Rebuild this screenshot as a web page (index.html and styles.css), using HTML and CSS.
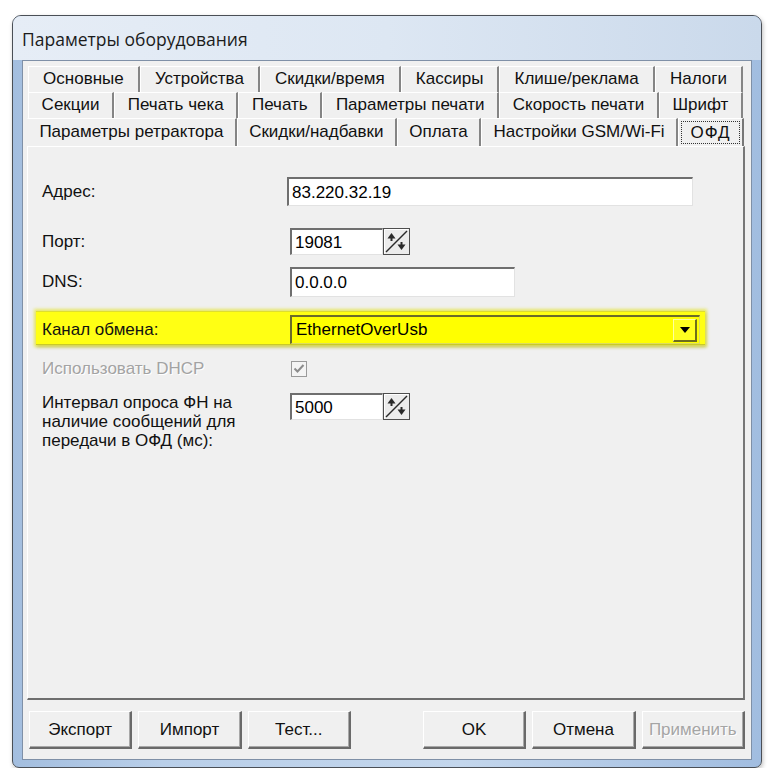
FILE: index.html
```html
<!DOCTYPE html>
<html lang="ru">
<head>
<meta charset="utf-8">
<title>Параметры оборудования</title>
<link rel="stylesheet" href="styles.css">
</head>
<body>
<div class="window">
  <div class="titlebar"><span class="title">Параметры оборудования</span></div>
  <div class="client">
    <div class="tabs">
      <div class="tabrow r1">
        <div class="tab">Основные</div>
        <div class="tab">Устройства</div>
        <div class="tab">Скидки/время</div>
        <div class="tab">Кассиры</div>
        <div class="tab">Клише/реклама</div>
        <div class="tab">Налоги</div>
      </div>
      <div class="tabrow r2">
        <div class="tab">Секции</div>
        <div class="tab">Печать чека</div>
        <div class="tab">Печать</div>
        <div class="tab">Параметры печати</div>
        <div class="tab">Скорость печати</div>
        <div class="tab">Шрифт</div>
      </div>
      <div class="tabrow r3">
        <div class="tab">Параметры ретрактора</div>
        <div class="tab">Скидки/надбавки</div>
        <div class="tab">Оплата</div>
        <div class="tab">Настройки GSM/Wi-Fi</div>
        <div class="tab sel"><span class="focus">ОФД</span></div>
      </div>
    </div>
    <div class="page">
      <div class="row row-addr">
        <label class="lbl">Адрес:</label>
        <div class="edit edit-addr">83.220.32.19</div>
      </div>
      <div class="row row-port">
        <label class="lbl">Порт:</label>
        <div class="spinwrap">
          <div class="edit edit-num">19081</div>
          <svg class="spin" width="27" height="27" viewBox="0 0 27 27">
            <rect x="0.5" y="0.5" width="26" height="26" fill="#ececec" stroke="#4e4e4e"/>
            <line x1="1.5" y1="1.5" x2="25.5" y2="1.5" stroke="#fff"/>
            <line x1="1.5" y1="1.5" x2="1.5" y2="25.5" stroke="#fff"/>
            <line x1="3" y1="24" x2="24" y2="3" stroke="#2a2a2a" stroke-width="1.5"/>
            <path d="M4.5 10.5 L8.5 5 L12.5 10.5 Z" fill="#2a2a2a"/>
            <rect x="7.5" y="9.5" width="2" height="3.5" fill="#2a2a2a"/>
            <path d="M14.5 16.5 L18.5 22 L22.5 16.5 Z" fill="#2a2a2a"/>
            <rect x="17.5" y="14" width="2" height="3.5" fill="#2a2a2a"/>
          </svg>
        </div>
      </div>
      <div class="row row-dns">
        <label class="lbl">DNS:</label>
        <div class="edit edit-dns">0.0.0.0</div>
      </div>
      <div class="band">
        <div class="row row-chan">
          <label class="lbl">Канал обмена:</label>
          <div class="combo">
            <span class="combo-text">EthernetOverUsb</span>
            <span class="combo-btn">
              <svg width="10" height="6" viewBox="0 0 10 6"><path d="M0 0 H10 L5 6 Z" fill="#000"/></svg>
            </span>
          </div>
        </div>
      </div>
      <div class="row row-dhcp">
        <label class="lbl disabled">Использовать DHCP</label>
        <svg class="check" width="16" height="16" viewBox="0 0 16 16">
          <rect x="0.5" y="0.5" width="15" height="15" fill="#f4f4f4" stroke="#9a9a9a"/>
          <path d="M3.5 7.5 L6.5 10.5 L12.5 4" fill="none" stroke="#8c8c8c" stroke-width="2"/>
        </svg>
      </div>
      <div class="row row-int">
        <label class="lbl multi">Интервал опроса ФН на<br>наличие сообщений для<br>передачи в ОФД (мс):</label>
        <div class="spinwrap">
          <div class="edit edit-num">5000</div>
          <svg class="spin" width="27" height="27" viewBox="0 0 27 27">
            <rect x="0.5" y="0.5" width="26" height="26" fill="#ececec" stroke="#4e4e4e"/>
            <line x1="1.5" y1="1.5" x2="25.5" y2="1.5" stroke="#fff"/>
            <line x1="1.5" y1="1.5" x2="1.5" y2="25.5" stroke="#fff"/>
            <line x1="3" y1="24" x2="24" y2="3" stroke="#2a2a2a" stroke-width="1.5"/>
            <path d="M4.5 10.5 L8.5 5 L12.5 10.5 Z" fill="#2a2a2a"/>
            <rect x="7.5" y="9.5" width="2" height="3.5" fill="#2a2a2a"/>
            <path d="M14.5 16.5 L18.5 22 L22.5 16.5 Z" fill="#2a2a2a"/>
            <rect x="17.5" y="14" width="2" height="3.5" fill="#2a2a2a"/>
          </svg>
        </div>
      </div>
    </div>
    <div class="buttons">
      <button class="btn">Экспорт</button>
      <button class="btn">Импорт</button>
      <button class="btn">Тест...</button>
      <button class="btn btn-ok">OK</button>
      <button class="btn">Отмена</button>
      <button class="btn btn-disabled">Применить</button>
    </div>
  </div>
</div>
</body>
</html>
```
FILE: styles.css
```css
* { box-sizing: border-box; }
body {
  margin: 0;
  background: #ffffff;
  font-family: "Liberation Sans", Arial, sans-serif;
  font-size: 17px;
  color: #000;
}
.window {
  margin: 15px 0 0 12px;
  width: 750px;
  height: 753px;
  border: 1px solid #4a4f56;
  border-radius: 9px 9px 7px 7px;
  display: flex;
  flex-direction: column;
  background: linear-gradient(90deg, #a3bedf 0%, #b9cfe9 20%, #c3d6ec 60%, #a1bde0 100%);
  box-shadow: 1px 2px 4px rgba(0,0,0,0.25);
  overflow: hidden;
}
.titlebar {
  height: 44px;
  flex: none;
  display: flex;
  align-items: center;
  padding-left: 9px;
  padding-top: 2px;
  background: linear-gradient(90deg, #e6edf6 0%, #dde7f3 50%, #cad9eb 100%);
}
.title {
  font-family: "Open Sans", "Noto Sans", sans-serif;
  font-size: 17.5px;
  color: #1b1b1b;
}
.client {
  margin: 0 9px 7px;
  flex: 1;
  background: #f0f0f0;
  border: 1px solid #7f90a7;
  display: flex;
  flex-direction: column;
  padding: 5px 6px 0 4px;
}
.tabs {
  height: 80px;
  flex: none;
  display: flex;
  flex-direction: column;
}
.tabrow {
  display: flex;
  height: 26px;
  margin: 0 2px 0 1px;
}
.tabrow.r3 {
  height: 28px;
  margin: 0 1px 0 0;
}
.tab {
  flex: 1 1 auto;
  display: flex;
  align-items: center;
  justify-content: center;
  white-space: nowrap;
  padding: 0 5px 1px;
  border-left: 1px solid #ffffff;
  border-top: 1px solid #ffffff;
  border-right: 2px solid #858585;
  background: #f0f0f0;
  color: #111;
}
.tabrow.r3 .tab:first-child { border-left-color: #f0f0f0; }
.tab.sel {
  flex: 0 0 66px;
  padding: 2px;
  border-right: 2px solid #777;
}
.focus {
  display: flex;
  align-items: center;
  justify-content: center;
  width: 100%;
  height: 100%;
  border: 1px dotted #333;
  letter-spacing: 1px;
}
.page {
  height: 554px;
  flex: none;
  border-top: 1px solid #ffffff;
  border-left: 1px solid #ffffff;
  border-right: 2px solid #777;
  border-bottom: 2px solid #6e6e6e;
  padding-left: 14px;
  display: flex;
  flex-direction: column;
}
.row {
  display: grid;
  grid-template-columns: 248px auto;
  align-items: center;
  justify-items: start;
}
.lbl { color: #111; }
.lbl.disabled {
  color: #a3a3a3;
  text-shadow: 1px 1px 0 #ffffff;
}
.lbl.multi {
  line-height: 19px;
  align-self: start;
}
.row-addr { margin-top: 30px; height: 29px; }
.row-port { margin-top: 22px; height: 27px; }
.row-dns { margin-top: 12px; height: 30px; }
.row-chan { height: 29px; }
.row-dhcp { margin-top: 14px; height: 16px; }
.row-int { margin-top: 18px; align-items: start; }
.edit {
  height: 100%;
  background: #ffffff;
  border-top: 2px solid #6f6f6f;
  border-left: 2px solid #6f6f6f;
  border-right: 1px solid #e2e2e2;
  border-bottom: 1px solid #e2e2e2;
  display: flex;
  align-items: center;
  padding-left: 3px;
  padding-top: 1px;
}
.edit-addr { width: 406px; margin-left: -3px; }
.edit-dns { width: 225px; }
.spinwrap {
  display: flex;
  height: 27px;
}
.edit-num { width: 93px; height: 27px; }
.spin { display: block; flex: none; }
.band {
  margin-top: 14px;
  margin-left: -6px;
  width: 669px;
  height: 34px;
  padding: 3px 5px 0 6px;
  background: #ffff14;
  border-top: 1px solid #dede30;
  border-bottom: 1px solid #c9c92a;
  box-shadow: 0 0 3px 2px rgba(230, 230, 60, 0.75), 1px 2px 3px rgba(110, 110, 0, 0.45);
}
.combo {
  width: 410px;
  height: 29px;
  background: #ffff00;
  border-top: 2px solid #6c6c2a;
  border-left: 2px solid #6c6c2a;
  border-right: 1px solid #dcdc60;
  border-bottom: 1px solid #dcdc60;
  display: flex;
  align-items: center;
  justify-content: space-between;
  padding: 1px 2px 1px 4px;
}
.combo-text { color: #000; }
.combo-btn {
  width: 24px;
  height: 23px;
  display: flex;
  align-items: center;
  justify-content: center;
  background: #ffff20;
  border-top: 1px solid #ffffa0;
  border-left: 1px solid #ffffa0;
  border-right: 2px solid #6d6d1c;
  border-bottom: 2px solid #6d6d1c;
}
.check { display: block; margin-left: 1px; }
.buttons {
  display: flex;
  gap: 6px;
  padding: 11px 0 0 2px;
}
.btn {
  width: 105px;
  height: 38px;
  font-family: "Liberation Sans", Arial, sans-serif;
  font-size: 17px;
  color: #111;
  background: #f0f0f0;
  border-top: 1px solid #ffffff;
  border-left: 1px solid #ffffff;
  border-right: 2px solid #6a6a6a;
  border-bottom: 2px solid #6a6a6a;
  box-shadow: inset -1px -1px 0 #a8a8a8;
  padding: 0;
}
.btn-ok { margin-left: 66px; }
.btn-disabled {
  color: #a5a5a5;
  text-shadow: 1px 1px 0 #ffffff;
}
```
